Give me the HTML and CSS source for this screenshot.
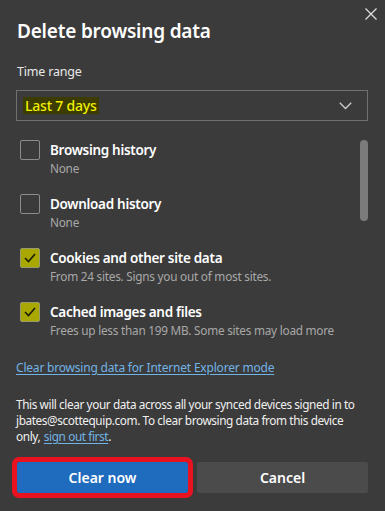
FILE: index.html
```html
<!DOCTYPE html>
<html lang="en">
<head>
  <meta charset="UTF-8">
  <meta name="viewport" content="width=device-width, initial-scale=1.0">
  <title>Delete browsing data</title>
  <link rel="stylesheet" href="styles.css">
</head>
<body>

  <div class="dialog">
    <div class="dialog-header">
      <h2 class="dialog-title">Delete browsing data</h2>
      <button class="close-btn" aria-label="Close">
        <svg width="12" height="12" viewBox="0 0 12 12"><path d="M0.5 0.5 L11.5 11.5 M11.5 0.5 L0.5 11.5" stroke="#e0e0e0" stroke-width="1.2" fill="none"/></svg>
      </button>
    </div>

    <div class="field-label">Time range</div>
    <div class="select-box">
      <span class="select-value">Last 7 days</span>
      <svg width="13" height="8" viewBox="0 0 13 8"><path d="M0.8 0.8 L6.5 6.5 L12.2 0.8" stroke="#d0d0d0" stroke-width="1.3" fill="none"/></svg>
    </div>

    <div class="option-list">
      <div class="option">
        <span class="check-box"></span>
        <div class="option-text">
          <div class="option-name">Browsing history</div>
          <div class="option-desc">None</div>
        </div>
      </div>
      <div class="option">
        <span class="check-box"></span>
        <div class="option-text">
          <div class="option-name">Download history</div>
          <div class="option-desc">None</div>
        </div>
      </div>
      <div class="option">
        <span class="check-box checked">
          <svg width="18" height="18" viewBox="0 0 18 18"><path d="M4 9 L7.5 12.5 L14 5" stroke="#1d1d00" stroke-width="1.6" fill="none"/></svg>
        </span>
        <div class="option-text">
          <div class="option-name">Cookies and other site data</div>
          <div class="option-desc">From 24 sites. Signs you out of most sites.</div>
        </div>
      </div>
      <div class="option">
        <span class="check-box checked">
          <svg width="18" height="18" viewBox="0 0 18 18"><path d="M4 9 L7.5 12.5 L14 5" stroke="#1d1d00" stroke-width="1.6" fill="none"/></svg>
        </span>
        <div class="option-text">
          <div class="option-name">Cached images and files</div>
          <div class="option-desc">Frees up less than 199 MB. Some sites may load more</div>
        </div>
      </div>
      <div class="scroll-thumb"></div>
    </div>

    <a class="ie-link" href="#">Clear browsing data for Internet Explorer mode</a>

    <p class="sync-note">This will clear your data across all your synced devices signed in to jbates@scottequip.com. To clear browsing data from this device only, <a href="#">sign out first</a>.</p>

    <div class="dialog-actions">
      <button class="btn btn-primary">Clear now</button>
      <button class="btn btn-secondary">Cancel</button>
    </div>
  </div>

</body>
</html>
```

FILE: styles.css
```css
html, body {
  margin: 0;
  height: 100%;
}
body {
  background-color: #3b3b3b;
  color: #ffffff;
  font-family: 'Segoe UI', 'Noto Sans', sans-serif;
  overflow: hidden;
}
.dialog {
  padding: 0 17px 0 16px;
}
.dialog-header {
  display: flex;
  justify-content: space-between;
  align-items: flex-start;
  height: 63px;
}
.dialog-title {
  margin: 18px 0 0 1px;
  font-size: 19px;
  font-weight: 600;
  line-height: 26px;
  letter-spacing: -0.2px;
}
.close-btn {
  margin: 8px -9px 0 0;
  padding: 0;
  border: none;
  background: none;
  width: 12px;
  height: 12px;
  display: flex;
}
.field-label {
  margin-left: 1px;
  font-size: 12.5px;
  line-height: 18px;
  color: #e8e8e8;
  letter-spacing: -0.2px;
}
.select-box {
  margin-top: 9px;
  height: 29px;
  border: 1px solid #707070;
  display: flex;
  align-items: center;
  justify-content: space-between;
  padding: 0 15px 0 6px;
}
.select-value {
  background-color: #3c3c00;
  color: #f0f000;
  font-size: 14px;
  font-weight: 500;
  line-height: 17px;
  padding: 0 2px;
  letter-spacing: -0.2px;
}
/* scroll area with the four options */
.option-list {
  position: relative;
  margin-top: 19px;
  padding-left: 4px;
  height: 198px;
}
.option {
  display: flex;
  gap: 10px;
  height: 54px;
}
.check-box {
  flex: none;
  width: 18px;
  height: 18px;
  border: 1px solid #8c8c8c;
  border-radius: 2px;
  display: flex;
}
.check-box.checked {
  background-color: #a8a800;
  border-color: #9a9a70;
}
.option-name {
  font-size: 13.5px;
  font-weight: 600;
  line-height: 20px;
  letter-spacing: -0.3px;
}
.option-desc {
  font-size: 11.8px;
  line-height: 16px;
  color: #a8a8a8;
  letter-spacing: -0.25px;
}
.scroll-thumb {
  position: absolute;
  top: 0;
  right: 0;
  width: 8px;
  height: 81px;
  border-radius: 4px;
  background-color: #7b7b7b;
}
.ie-link {
  display: inline-block;
  margin-top: 22px;
  font-size: 12px;
  line-height: 16px;
  color: #72b3e6;
  text-decoration: underline;
  text-underline-offset: 2px;
  letter-spacing: -0.2px;
}
.sync-note {
  margin: 19px -2px 0 0;
  font-size: 11.8px;
  line-height: 16px;
  color: #f0f0f0;
  letter-spacing: -0.4px;
}
.sync-note a {
  margin-left: 1px;
  color: #72b3e6;
  text-underline-offset: 2px;
}
.dialog-actions {
  display: flex;
  gap: 9px;
  margin-top: 18px;
  padding-left: 1px;
}
.btn {
  flex: 1;
  height: 31px;
  border: none;
  border-radius: 2px;
  color: #ffffff;
  font-family: inherit;
  font-size: 14px;
  font-weight: 600;
}
.btn-primary {
  background-color: #1f6bbd;
  outline: 5px solid #e8131f;
}
.btn-secondary {
  background-color: #4b4b4b;
}
```
